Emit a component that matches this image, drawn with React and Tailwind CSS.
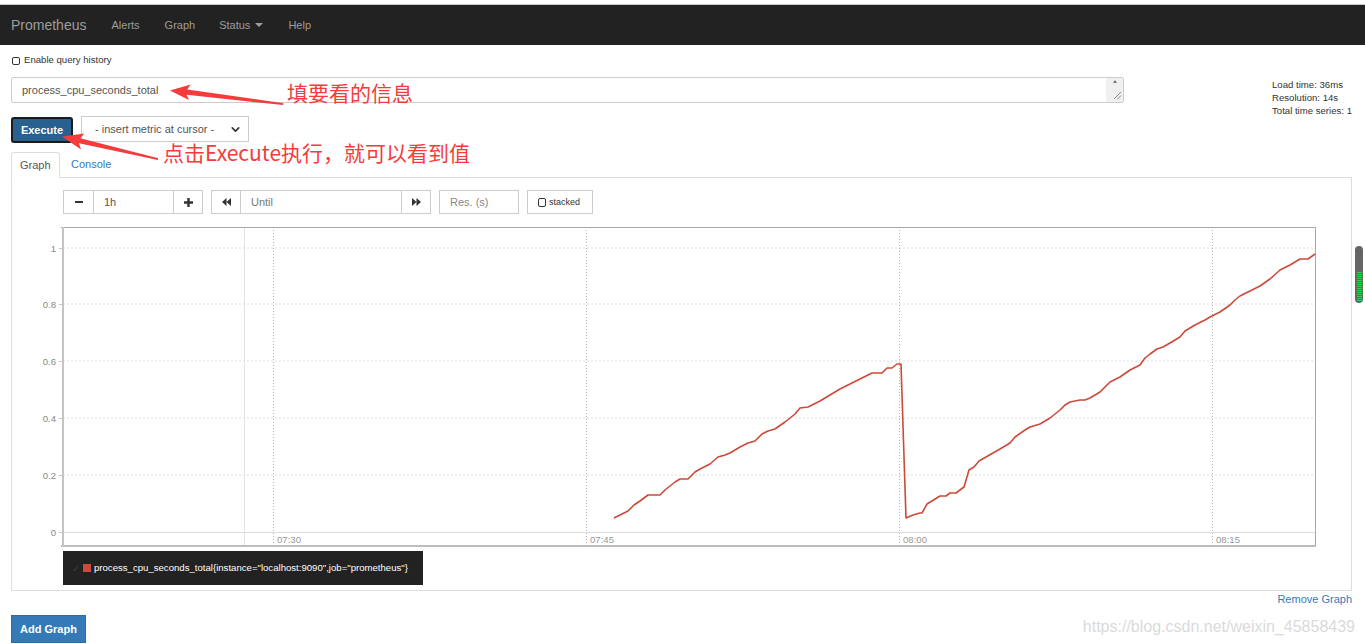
import { ChevronDown } from "lucide-react";

const SERIES_A = [
  [614, 518], [628, 511], [634, 505], [640, 501], [648, 495], [660, 495], [665, 490], [675, 482],
  [680, 479], [688, 479], [695, 472], [700, 469], [710, 464], [718, 457], [725, 455], [730, 453],
  [740, 447], [748, 443], [755, 441], [762, 434], [768, 431], [775, 429], [785, 422], [795, 414],
  [800, 408], [808, 407], [820, 401], [830, 395], [840, 389], [850, 384], [872, 373], [882, 373],
  [887, 368], [892, 368], [897, 364], [901, 364], [906, 518], [913, 515], [920, 513], [922, 513],
  [927, 504], [940, 496], [946, 496], [950, 493], [956, 493], [964, 487], [969, 470], [974, 467],
  [979, 461], [1000, 449], [1010, 443], [1015, 437], [1025, 430], [1030, 427], [1040, 424],
  [1050, 418], [1060, 410], [1065, 405], [1070, 402], [1080, 400], [1085, 400], [1090, 398],
  [1100, 392], [1110, 382], [1120, 377], [1130, 370], [1140, 365], [1145, 358], [1150, 354],
  [1157, 349], [1163, 347], [1170, 343], [1180, 337], [1185, 331], [1195, 325], [1205, 320],
  [1210, 317], [1220, 312], [1230, 305], [1235, 300], [1240, 296], [1250, 291], [1260, 286],
  [1270, 279], [1280, 270], [1290, 265], [1300, 259], [1308, 259], [1315, 254],
];

const Y_TICKS = [
  { label: "1", y: 248 },
  { label: "0.8", y: 304 },
  { label: "0.6", y: 361 },
  { label: "0.4", y: 418 },
  { label: "0.2", y: 475 },
  { label: "0", y: 532 },
];

const X_TICKS = [
  { label: "07:30", x: 273 },
  { label: "07:45", x: 586 },
  { label: "08:00", x: 899 },
  { label: "08:15", x: 1212 },
];

function Chart() {
  return (
    <svg width="1339" height="326" viewBox="12 222 1339 326" className="block">
      {/* grid */}
      {Y_TICKS.slice(0, 5).map((t) => (
        <line key={t.label} x1="63" x2="1315" y1={t.y} y2={t.y} stroke="#dcdcdc" strokeDasharray="2 2" />
      ))}
      <line x1="63" x2="1315" y1="532.5" y2="532.5" stroke="#dcdcdc" />
      <line x1="244.5" x2="244.5" y1="227" y2="546" stroke="#e2e2e2" />
      {X_TICKS.map((t) => (
        <g key={t.label}>
          <line x1={t.x + 0.5} x2={t.x + 0.5} y1="227" y2="546" stroke="#b5b5b5" strokeDasharray="1 2" />
          <text x={t.x + 4} y="543" fontSize="9.6" fill="#999" fontFamily="Liberation Sans, Arial, sans-serif">
            {t.label}
          </text>
        </g>
      ))}
      {/* frame */}
      <line x1="61" x2="1315.5" y1="227.5" y2="227.5" stroke="#a8a8a8" />
      <line x1="1315.5" x2="1315.5" y1="227" y2="546" stroke="#a8a8a8" />
      <line x1="61" x2="1316" y1="546" y2="546" stroke="#a8a8a8" strokeWidth="1.5" />
      <line x1="63" x2="63" y1="227" y2="547" stroke="#c4c4c4" strokeWidth="2" />
      {Y_TICKS.map((t) => (
        <g key={t.label}>
          <line x1="59" x2="63" y1={t.y + 0.5} y2={t.y + 0.5} stroke="#c4c4c4" />
          <text x="56" y={t.y + 3.5} fontSize="9.6" fill="#888" textAnchor="end" fontFamily="Liberation Sans, Arial, sans-serif">
            {t.label}
          </text>
        </g>
      ))}
      <polyline
        points={SERIES_A.map((p) => p.join(",")).join(" ")}
        fill="none"
        stroke="#cb4a3b"
        strokeWidth="1.6"
        strokeLinejoin="round"
      />
    </svg>
  );
}

function CtlButton({ children, className = "" }) {
  return (
    <div className={`h-[24px] w-[30px] border border-[#ccc] bg-white flex items-center justify-center ${className}`}>
      {children}
    </div>
  );
}

function Backward() {
  return (
    <svg width="9" height="8" viewBox="0 0 9 8">
      <path d="M4.5 0 L0 4 L4.5 8 Z M9 0 L4.5 4 L9 8 Z" fill="#333" />
    </svg>
  );
}

function Forward() {
  return (
    <svg width="9" height="8" viewBox="0 0 9 8">
      <path d="M0 0 L4.5 4 L0 8 Z M4.5 0 L9 4 L4.5 8 Z" fill="#333" />
    </svg>
  );
}

function Annotations() {
  return (
    <>
      <svg className="absolute left-0 top-0 pointer-events-none" width="1365" height="644">
        <polygon
          points="170,90.5 190.7,84.5 187.2,89.4 283.5,103.2 283,105 186.6,94.8 189,100"
          fill="#f53b3b"
        />
        <polygon
          points="62,136.5 84.3,133.5 80.3,138.3 158.4,158.2 157.8,160 79,143.3 81,149.5"
          fill="#f53b3b"
        />
      </svg>
      <div className="absolute left-[287px] top-[80px] text-[21px] leading-[25px] text-[#f53b3b] font-['Noto_Sans_CJK_SC',sans-serif] whitespace-nowrap">
        填要看的信息
      </div>
      <div className="absolute left-[163px] top-[140px] text-[21px] leading-[25px] text-[#f53b3b] font-['Noto_Sans_CJK_SC',sans-serif] whitespace-nowrap">
        点击Execute执行，就可以看到值
      </div>
    </>
  );
}

export default function App() {
  return (
    <div className="relative w-full h-[644px] overflow-hidden bg-white text-[#333] font-['Liberation_Sans',Arial,sans-serif]">
      <div className="h-[5px] bg-white border-b border-[#c8c8c8]" />

      {/* Navbar */}
      <nav className="h-[40px] bg-[#222] flex items-center pl-[11px] text-[#9d9d9d]">
        <span className="text-[14px]">Prometheus</span>
        <span className="text-[11px] ml-[25px]">Alerts</span>
        <span className="text-[11px] ml-[25px]">Graph</span>
        <span className="text-[11px] ml-[24px] flex items-center">
          Status
          <span className="ml-[5px] w-0 h-0 border-x-[4px] border-t-[4px] border-x-transparent border-t-[#9d9d9d]" />
        </span>
        <span className="text-[11px] ml-[25px]">Help</span>
      </nav>

      <main className="pl-[11px] pr-[13px]">
        {/* Query history */}
        <div className="h-[31px] flex items-center pl-[1px]">
          <span className="w-[8px] h-[8px] rounded-[2px] border-[1.5px] border-[#333]" />
          <span className="ml-[4px] text-[9.6px] text-[#333]">Enable query history</span>
        </div>

        {/* Expression */}
        <div className="mt-[1px] h-[40px] flex items-start">
          <div className="w-[1114px] h-[26px] border border-[#ccc] rounded-[2px] flex items-stretch">
            <div className="flex-1 pl-[10px] flex items-center text-[11px] text-[#555]">
              process_cpu_seconds_total
            </div>
            <div className="w-[17px] bg-[#f0f0f0] flex flex-col items-center justify-between py-[2px]">
              <span className="w-0 h-0 border-x-[2.5px] border-b-[3px] border-x-transparent border-b-[#777]" />
              <svg width="9" height="9" viewBox="0 0 9 9" className="self-end mr-[1px]">
                <path d="M1 8 L8 1 M4.5 8 L8 4.5" stroke="#888" strokeWidth="1" />
              </svg>
            </div>
          </div>
          <div className="ml-[148px] text-[9.6px] leading-[13px] text-[#333] whitespace-nowrap pt-[1px]">
            <div>Load time: 36ms</div>
            <div>Resolution: 14s</div>
            <div>Total time series: 1</div>
          </div>
        </div>

        {/* Execute row */}
        <div className="h-[26px] flex items-center">
          <button className="w-[62px] h-[26px] rounded-[3px] border-2 border-[#1b1b1b] bg-[#28608f] text-white text-[11px] font-bold">
            Execute
          </button>
          <div className="ml-[8px] -mt-[2px] w-[168px] h-[26px] border border-[#ccc] flex items-center justify-between pl-[13px] pr-[6px] text-[11px] text-[#555]">
            <span>- insert metric at cursor -</span>
            <ChevronDown size={13} strokeWidth={3} color="#333" />
          </div>
        </div>

        {/* Tabs */}
        <div className="mt-[9px] h-[26px] flex items-end border-b border-[#ddd]">
          <div className="h-[26px] w-[49px] -mb-px border border-[#ddd] border-b-white bg-white rounded-t-[3px] flex items-center pl-[8px] text-[11px] text-[#555]">
            Graph
          </div>
          <div className="h-[25px] ml-[2px] pl-[9px] flex items-center text-[11px] text-[#337ab7]">Console</div>
        </div>

        {/* Graph panel */}
        <div className="h-[413px] pt-[12px] border-x border-b border-[#ddd]">
          <div className="ml-[51px] h-[24px] flex items-center">
            <CtlButton className="w-[31px]">
              <span className="w-[8px] h-[2px] bg-[#333]" />
            </CtlButton>
            <div className="w-[79px] h-[24px] border-y border-[#ccc] flex items-center pl-[10px] text-[11px] text-[#555]">1h</div>
            <CtlButton>
              <svg width="9" height="9" viewBox="0 0 9 9">
                <path d="M3.3 0 H5.7 V3.3 H9 V5.7 H5.7 V9 H3.3 V5.7 H0 V3.3 H3.3 Z" fill="#333" />
              </svg>
            </CtlButton>
            <CtlButton className="ml-[8px]">
              <Backward />
            </CtlButton>
            <div className="w-[160px] h-[24px] border-y border-[#ccc] flex items-center pl-[10px] text-[11px] text-[#777]">Until</div>
            <CtlButton>
              <Forward />
            </CtlButton>
            <div className="ml-[8px] w-[80px] h-[24px] border border-[#ccc] flex items-center pl-[10px] text-[11px] text-[#888]">
              Res. (s)
            </div>
            <div className="ml-[8px] w-[66px] h-[24px] border border-[#ccc] flex items-center pl-[10px]">
              <span className="w-[8px] h-[9px] rounded-[2px] border-[1.5px] border-[#333]" />
              <span className="ml-[3px] text-[9px] leading-[9px] text-[#333]">stacked</span>
            </div>
          </div>

          <div className="mt-[8px]">
            <Chart />
          </div>

          <div className="ml-[51px] mt-[3px] w-[360px] h-[34px] bg-[#222] flex items-center pl-[9px] text-[9.6px] text-white whitespace-nowrap">
            <span className="text-[#3a3a3a] text-[10px]">✓</span>
            <span className="ml-[3px] w-[8px] h-[8px] bg-[#cb4a3b]" />
            <span className="ml-[3px]">process_cpu_seconds_total{'{'}instance="localhost:9090",job="prometheus"{'}'}</span>
          </div>
        </div>

        <div className="h-[17px] leading-[17px] text-right text-[11px] text-[#337ab7]">Remove Graph</div>

        <button className="mt-[7px] w-[75px] h-[28px] bg-[#337ab7] border border-[#2e6da4] text-white text-[11px] font-bold">
          Add Graph
        </button>
      </main>

      {/* scroll widget on the right edge */}
      <div className="absolute left-[1355px] top-[246px] w-[8px] h-[57px] rounded-full bg-[#666] flex flex-col items-center justify-end pb-[2px] gap-[1px]">
        {Array.from({ length: 15 }).map((_, i) => (
          <span key={i} className="w-[5px] h-[1px] bg-[#2fd53f]" />
        ))}
      </div>

      <Annotations />

      <div className="absolute right-[10px] top-[615px] text-[16px] text-[#dadada] whitespace-nowrap">
        https://blog.csdn.net/weixin_45858439
      </div>
    </div>
  );
}
